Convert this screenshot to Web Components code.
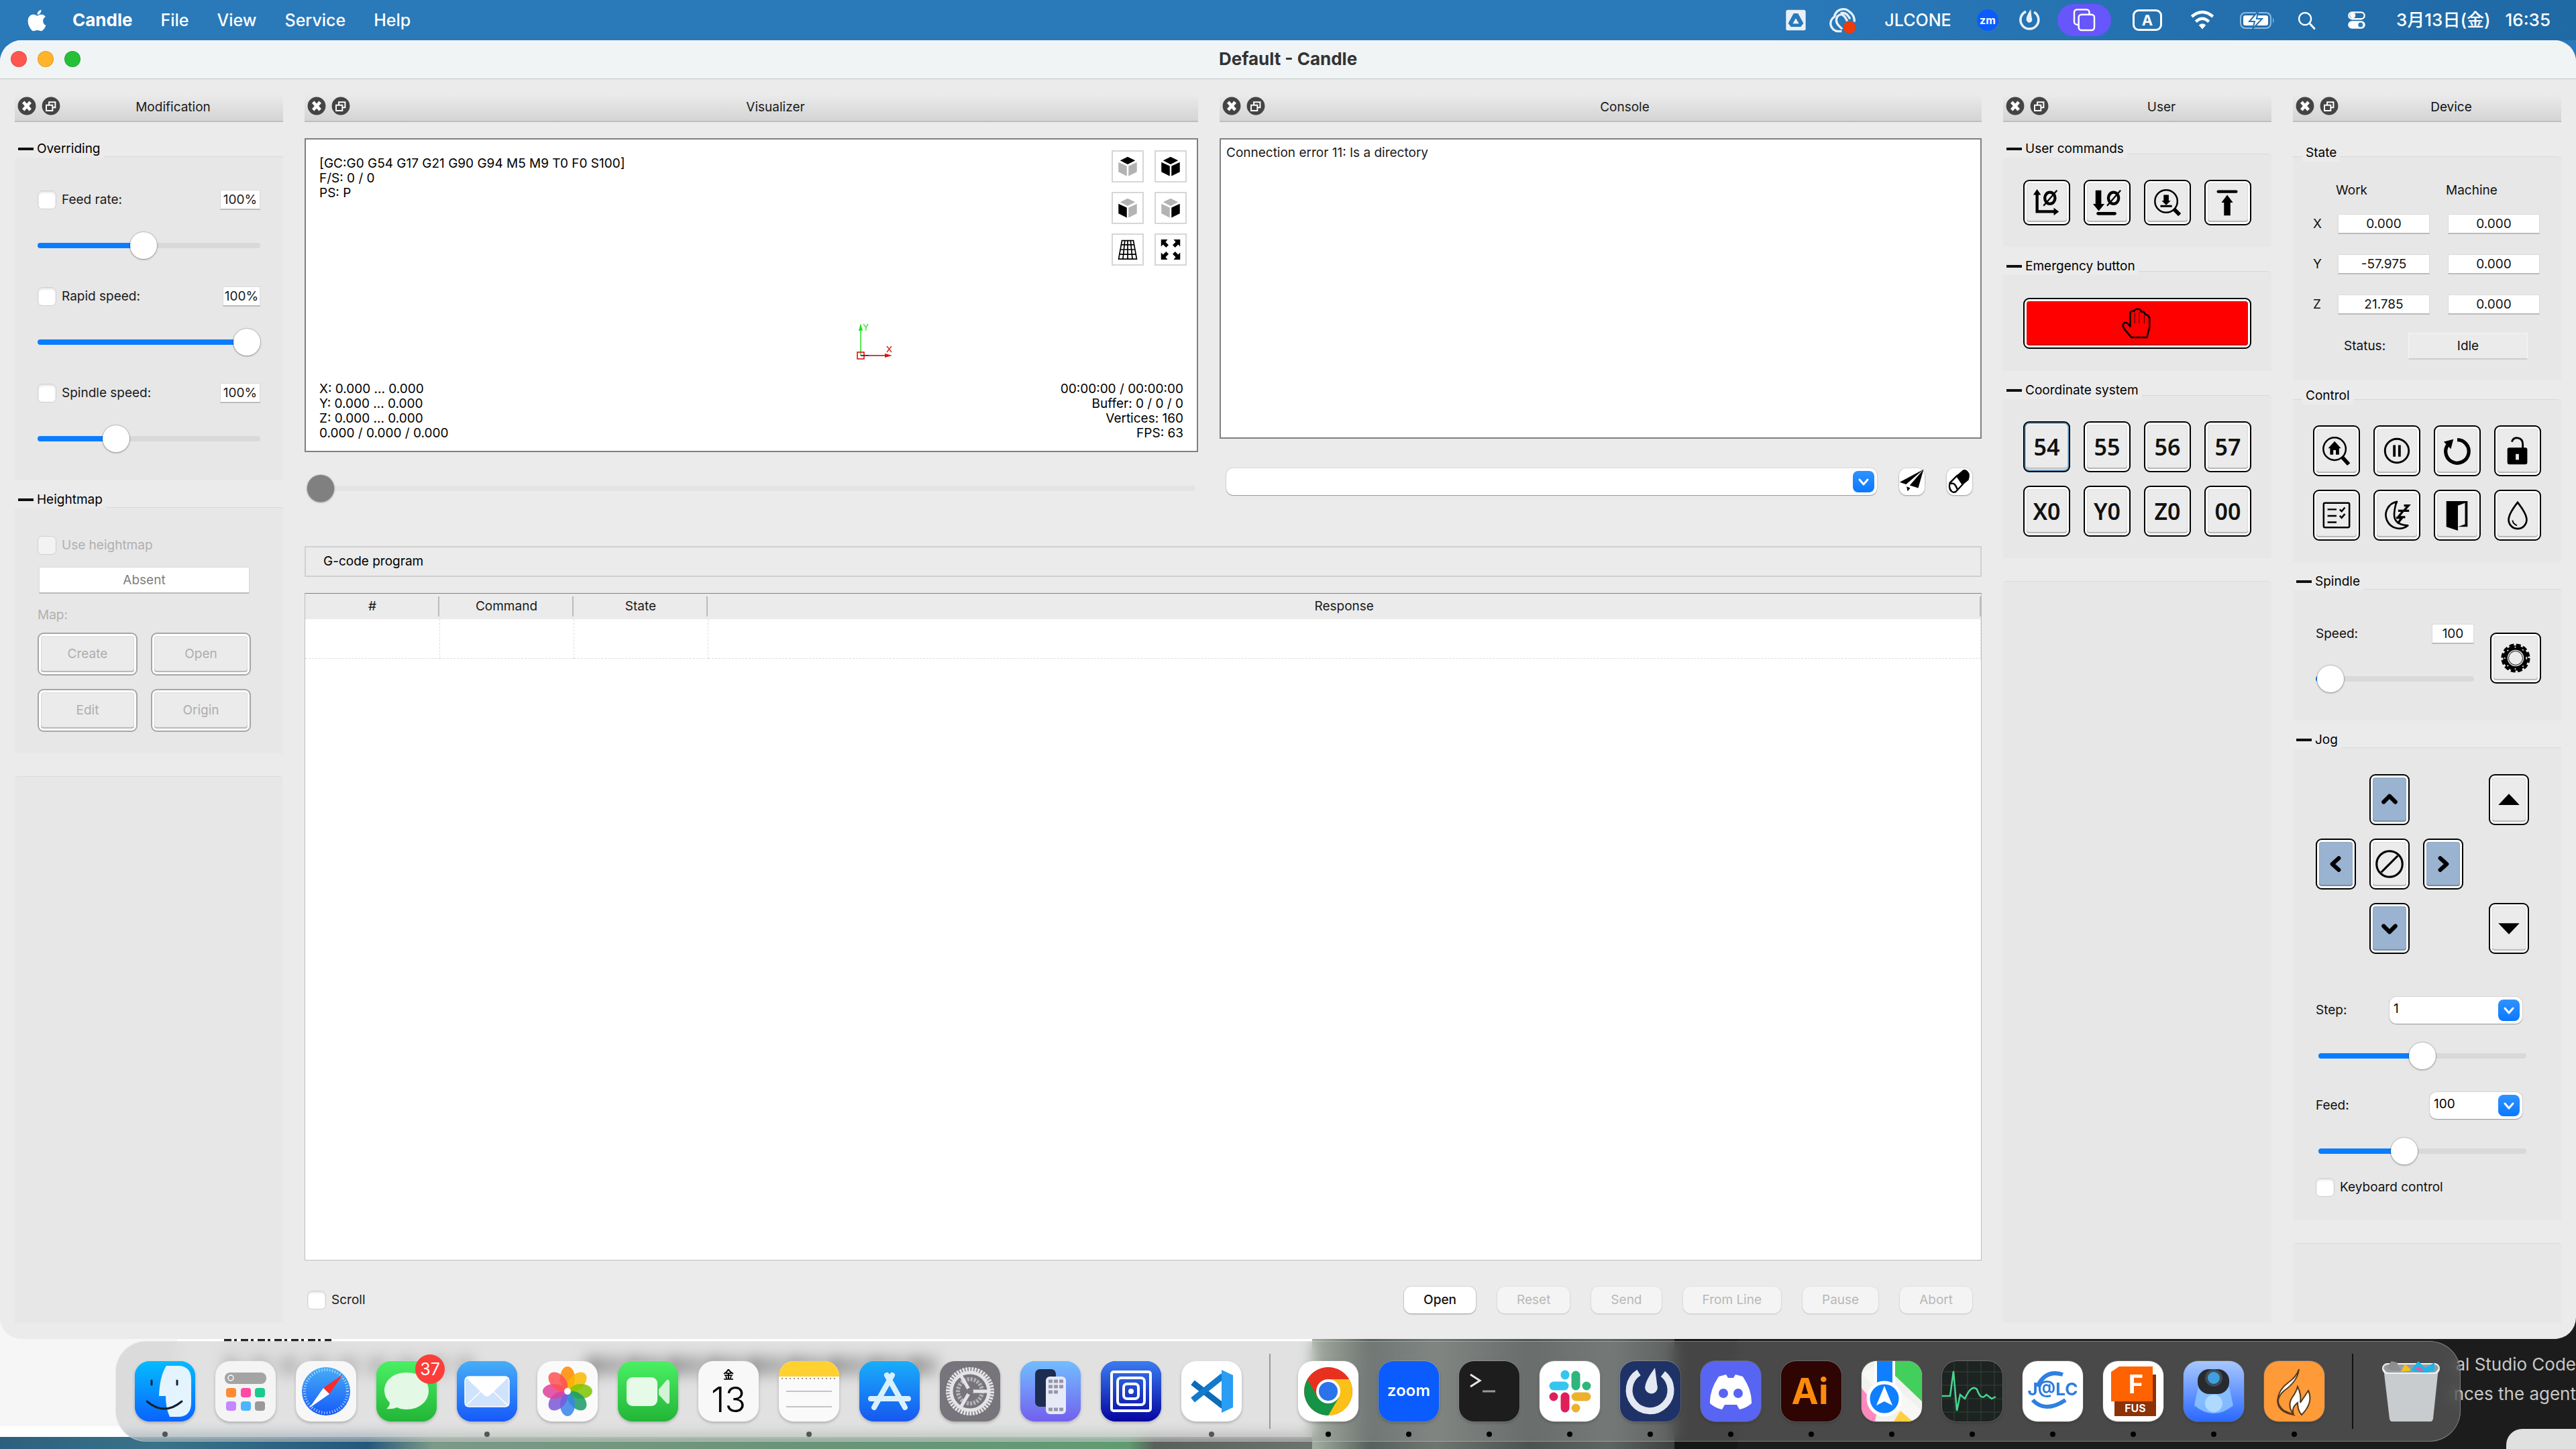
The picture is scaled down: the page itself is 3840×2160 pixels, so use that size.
<!DOCTYPE html>
<html lang="en">
<head>
<meta charset="utf-8">
<title>Default - Candle</title>
<style>
  html, body { margin: 0; }
  body {
    position: relative;
    display: flex;
    flex-direction: column;
    min-height: 100vh;
    overflow: hidden;
    font: 19px/24px Inter, "Liberation Sans", "Noto Sans CJK JP", sans-serif;
    color: #1a1a1a;
    background: #2a79b9;
  }
</style>
</head>
<body>
<desk-backdrop></desk-backdrop>
<menu-bar></menu-bar>
<app-window heading="Default - Candle">
  <modification-panel slot="left"></modification-panel>
  <program-area slot="center"></program-area>
  <user-panel slot="right"></user-panel>
  <device-panel slot="right"></device-panel>
</app-window>
<app-dock></app-dock>

<script>
const ICONS = {
  cubeTop: cube('#000', '#b3b3b3', '#b3b3b3'),
  cubeAll: cube('#000', '#000', '#000'),
  cubeLeft: cube('#b3b3b3', '#000', '#b3b3b3'),
  cubeRight: cube('#b3b3b3', '#b3b3b3', '#000'),
  grid: '<path fill="none" stroke="#000" stroke-width="2.4" d="M12 5H36L43 44H5ZM10 14H38M8 24H40M7 34H41M18 5L14 44M24 5V44M30 5L34 44"/>',
  expand: '<path d="M5 4H18L14 9L20 15L15 20L9 14L5 18ZM43 4H30L34 9L28 15L33 20L39 14L43 18ZM5 44H18L14 39L20 33L15 28L9 34L5 30ZM43 44H30L34 39L28 33L33 28L39 34L43 30Z"/>',
  plane: '<path d="M1 25L46 1L13 29ZM46 1L36 36L20 31ZM14 33L21 36L16 42Z"/>',
  eraser: '<path d="M19 12L29 3Q35-1 40 5Q45 10 41 21L30 30Z"/><path fill="#fff" stroke="#000" stroke-width="3" d="M19 13L30 29L18 42Q13 46 9 42Q3 37 6 26ZM7 28Q15 24 20 39"/>',
  zeroXY: '<path fill="none" stroke="#000" stroke-width="4.5" d="M9 9V38H37"/><path d="M3 12L9 3L15 12ZM35 32L43 38L35 44Z"/><g fill="none" stroke="#000"><ellipse cx="29" cy="17" rx="8" ry="9" stroke-width="4.5"/><path stroke-width="2.4" d="M19 29L40 5"/></g>',
  zeroZ: '<path d="M6 5H15V26H20L11 37L2 26H6Z"/><path stroke="#000" stroke-width="5" stroke-linecap="round" d="M10 41H36"/><g fill="none" stroke="#000"><ellipse cx="34" cy="17" rx="8" ry="9" stroke-width="4.5"/><path stroke-width="2.4" d="M24 29L45 5"/></g>',
  probe: '<circle cx="22" cy="22" r="17.5" fill="none" stroke="#000" stroke-width="2.6"/><path stroke="#000" stroke-width="6" d="M34 34L43 43"/><path d="M18 12H26V21H29L22 28L15 21H18ZM13 28H31V31H13Z"/>',
  safeZ: '<path stroke="#000" stroke-width="4.5" stroke-linecap="round" d="M9 7H37"/><path d="M23 12L32 24H28V44H18V24H14Z"/>',
  hand: '<path fill="none" stroke="#000" stroke-width="2.6" stroke-linejoin="round" d="M15 46L4 33Q-1 25 5 23Q9 22 13 29V8Q14 4 19 5Q21 1 25 2Q29 1 30 6Q35 5 36 10Q42 11 43 16V30L39 46Z"/><path stroke="#600" stroke-width="1.4" d="M20 7V24M27 6V24M35 10V24"/>',
  home: '<circle cx="21" cy="21" r="17.5" fill="none" stroke="#000" stroke-width="2.6"/><path stroke="#000" stroke-width="6" d="M33 34L43 45"/><path d="M21 9L31 20H28V30H23V23H19V30H14V20H11Z"/>',
  pause: '<circle cx="24" cy="24" r="18.5" fill="none" stroke="#000" stroke-width="3"/><path stroke="#000" stroke-width="4" d="M20 15V33M28 15V33"/>',
  reset: '<path fill="none" stroke="#000" stroke-width="5.5" d="M24 7A18 18 0 1 1 9 15"/><path d="M3 10L18 6L14 21Z"/>',
  unlock: '<rect x="8" y="19" width="31" height="26" rx="3"/><path fill="none" stroke="#000" stroke-width="3" d="M15 10Q17 3 24 4Q32 5 32 14V20"/><path fill="#ececec" d="M21 29H26V38H21Z"/>',
  list: '<rect x="4" y="5" width="40" height="38" rx="2" fill="none" stroke="#000" stroke-width="2.6"/><path fill="none" stroke="#000" stroke-width="2.6" d="M10 15H24M10 25H24M10 35H24M29 15L32 18L37 12M29 25L32 28L37 22"/>',
  sleep: '<path fill="none" stroke="#000" stroke-width="2.8" stroke-linejoin="round" d="M24 3A21 21 0 1 0 41 40Q18 39 20 20Q21 9 24 3Z"/><path fill="none" stroke="#000" stroke-width="3.4" d="M35 9H42L35 17H43M26 17H34L26 27H37M23 28H32L25 37"/>',
  door: '<path d="M7 2H40V42H25V48L7 42Z"/><path fill="#ececec" d="M25 9L36 5V38L25 42Z"/>',
  drop: '<path fill="none" stroke="#000" stroke-width="2.8" d="M24 4Q10 22 10 31A14 14 0 0 0 38 31Q38 22 24 4Z"/><path fill="none" stroke="#000" stroke-width="2" d="M16 32Q17 38 23 40"/>',
  spindle: '<circle cx="24" cy="24" r="15" fill="none" stroke="#000" stroke-width="9"/><circle cx="24" cy="24" r="20" fill="none" stroke="#000" stroke-width="5" stroke-dasharray="7 3.5"/><circle cx="24" cy="24" r="12" fill="none" stroke="#ddd" stroke-width="1.6"/><circle cx="24" cy="24" r="17" fill="none" stroke="#ddd" stroke-width="2" stroke-dasharray="2 11"/>',
  up: '<path fill="none" stroke="#000" stroke-width="7" stroke-linecap="round" stroke-linejoin="round" d="M14 28L24 18L34 28"/>',
  down: '<path fill="none" stroke="#000" stroke-width="7" stroke-linecap="round" stroke-linejoin="round" d="M14 20L24 30L34 20"/>',
  left: '<path fill="none" stroke="#000" stroke-width="7" stroke-linecap="round" stroke-linejoin="round" d="M29 14L18 24L29 34"/>',
  right: '<path fill="none" stroke="#000" stroke-width="7" stroke-linecap="round" stroke-linejoin="round" d="M19 14L30 24L19 34"/>',
  stop: '<circle cx="24" cy="24" r="22" fill="none" stroke="#000" stroke-width="3.6"/><path stroke="#000" stroke-width="3.6" d="M10 38L38 10"/>',
  zUp: '<path d="M6 33L24 14L42 33Z"/>',
  zDown: '<path d="M6 15L24 34L42 15Z"/>',
  close: '<circle cx="24" cy="24" r="23" fill="#444"/><path stroke="#fff" stroke-width="8" d="M15 14L33 34M33 14L15 34"/>',
  float: '<circle cx="24" cy="24" r="23" fill="#444"/><path fill="none" stroke="#fff" stroke-width="3.4" d="M12 22H28V36H12ZM19 20V14H35V28H29"/>',

  apple: '<path fill="#fff" d="M33 2Q34 10 25 13Q24 5 33 2ZM25 15Q29 12 34 12Q40 13 42 17Q36 21 37 27Q38 33 43 35Q41 42 36 46Q33 48 29 46Q25 44 21 46Q16 48 13 45Q5 36 5 25Q6 13 16 12Q20 12 25 15Z"/>',
  drive: '<path fill="#e8f1f8" fill-rule="evenodd" d="M6 1H42Q46 1 46 5V43Q46 47 42 47H6Q2 47 2 43V5Q2 1 6 1ZM19 9L7 31L13 39H35L41 31L29 9Z"/><path fill="#e8f1f8" d="M24 20L31 32H17Z"/>',
  cloud: '<path fill="none" stroke="#e8f1f8" stroke-width="4" d="M22 44H16A14 14 0 0 1 9 18A16 16 0 0 1 36 9Q45 15 45 27M15 16Q9 26 17 34Q20 37 23 40M15 17Q24 8 32 26"/><path fill="none" stroke="#e8f1f8" stroke-width="4" d="M20 12Q30 8 37 22"/><circle cx="36" cy="37" r="11" fill="#f03a0a"/>',
  flame: '<path fill="none" stroke="#e8f1f8" stroke-width="5" d="M17 6A19 19 0 1 0 34 7"/><path fill="#e8f1f8" d="M27 1Q16 18 18 24Q20 30 26 29Q32 27 29 18Z"/>',
  windows: '<rect x="6" y="5" width="27" height="27" rx="5" fill="none" stroke="#fff" stroke-width="3"/><rect x="14" y="14" width="28" height="28" rx="5" fill="#6656fb" stroke="#fff" stroke-width="3"/>',
  wifi: '<g fill="none" stroke="#fff" stroke-width="6"><path d="M3 17Q24-1 45 17M11 27Q24 15 37 27"/></g><path fill="#fff" d="M17 34Q24 28 31 34L24 42Z"/>',
  search: '<circle cx="20" cy="20" r="15" fill="none" stroke="#fff" stroke-width="4"/><path stroke="#fff" stroke-width="5" stroke-linecap="round" d="M31 31L43 44"/>',
  toggles: '<rect x="4" y="4" width="40" height="17" rx="8.500" fill="none" stroke="#fff" stroke-width="4"/><circle cx="14" cy="12" r="7" fill="#fff"/><rect x="2" y="26" width="44" height="20" rx="10" fill="#fff"/><circle cx="34" cy="36" r="6" fill="#2a79b9"/>',
};

function cube(top, left, right) {
  return `<path fill="${top}" d="M24 1L42 10L24 19L6 10Z"/><path fill="${left}" d="M2 14L22 23V47L2 37Z"/><path fill="${right}" d="M46 14L26 23V47L46 37Z"/>`;
}

// art for the dock tiles, drawn on a 90 x 90 tile
const TILES = {
  Finder: ['#10a7ff', '<rect width="90" height="90" fill="url(#g1)"/><path fill="#e4f4ff" d="M44 52H36Q37 22 47 7H66Q84 8 84 28V62Q84 82 66 83H52Q46 70 46 52Z"/><path fill="none" stroke="#123" stroke-width="3" stroke-linecap="round" d="M25 29V35M63 29V35M18 60Q44 82 70 60"/>'],
  Apps: ['#f4f4f4', '<rect x="14" y="17" width="62" height="17" rx="8" fill="#a4a4a4"/><circle cx="23" cy="25" r="4" fill="none" stroke="#fff" stroke-width="1.5"/><rect x="16" y="40" width="15" height="14" rx="4" fill="#ff8a34"/><rect x="38" y="40" width="15" height="14" rx="4" fill="#ff4aa4"/><rect x="59" y="40" width="15" height="14" rx="4" fill="#1cc98f"/><rect x="16" y="60" width="15" height="14" rx="4" fill="#c586ff"/><rect x="38" y="60" width="15" height="14" rx="4" fill="#4db5ff"/><rect x="59" y="60" width="15" height="14" rx="4" fill="#999"/>'],
  Safari: ['#f7f7f7', '<circle cx="45" cy="45" r="36" fill="url(#g2)"/><circle cx="45" cy="45" r="32" fill="none" stroke="#cfe6ff" stroke-width="4" stroke-dasharray="1 3"/><path fill="#ff2a2a" d="M70 20L50 49L41 40Z"/><path fill="#fff" d="M20 70L50 49L41 40Z"/>'],
  Messages: ['#36d04b', '<rect width="90" height="90" fill="url(#g3)"/><path fill="#e3f9e5" d="M45 17C66 17 78 29 78 44C78 60 64 72 45 72Q36 72 31 69Q24 72 15 71Q20 67 20 62Q12 54 12 44C12 29 25 17 45 17Z"/>'],
  Mail: ['#2c85f7', '<rect width="90" height="90" fill="url(#g2)"/><rect x="12" y="23" width="66" height="45" rx="6" fill="#cfe3fd" stroke="#fff" stroke-width="1.500"/><path fill="none" stroke="#fff" stroke-width="1.500" d="M13 67L37 44M77 67L53 44"/><path fill="#fff" d="M13 24H77L49 51Q45 54 41 51Z"/>'],
  Photos: ['#fafafa', ['#ff8a00', '#f9b800', '#7fc400', '#1a9c66', '#3a83ea', '#7a58d6', '#e0409c', '#ff5252'].map((c, i) => `<ellipse cx="45" cy="25" rx="11" ry="17" fill="${c}" fill-opacity=".86" transform="rotate(${i * 45} 45 45)"/>`).join('') + '<circle cx="45" cy="45" r="5" fill="#fff"/>'],
  FaceTime: ['#36d04b', '<rect width="90" height="90" fill="url(#g3)"/><rect x="13" y="24" width="46" height="43" rx="9" fill="#e6fae8"/><path fill="#d2f3d5" d="M61 42L73 28Q77 27 77 32V60Q77 65 73 63L61 50Z"/>'],
  Calendar: ['#f8f8f8', '<text x="45" y="26" font-size="16" font-weight="700" text-anchor="middle" font-family="Noto Sans CJK JP">金</text><text x="45" y="76" font-size="52" font-weight="300" text-anchor="middle">13</text>'],
  Notes: ['#fafafa', '<rect width="90" height="23" fill="#ffd130"/><path stroke="#999" stroke-width="2" stroke-dasharray="2 4" d="M4 26H88"/><path stroke="#c4c4c4" stroke-width="2" d="M11 45H79M11 68H79"/>'],
  'App Store': ['#1c8df8', '<rect width="90" height="90" fill="url(#g4)"/><g stroke="#d9f1ff" stroke-width="8" stroke-linecap="round"><path d="M49 21L22 69M41 21L68 69M17 56H73"/></g>'],
  Settings: ['#77757b', '<circle cx="45" cy="45" r="33" fill="none" stroke="#e4e4e6" stroke-width="6" stroke-dasharray="3 1.500"/><circle cx="45" cy="45" r="28" fill="none" stroke="#e4e4e6" stroke-width="5"/><circle cx="45" cy="45" r="18" fill="none" stroke="#b5b4b8" stroke-width="6" stroke-dasharray="3 2"/><path stroke="#e4e4e6" stroke-width="5" d="M45 45H73M45 45L31 21M45 45L31 69"/><circle cx="45" cy="45" r="5" fill="#77757b"/>'],
  Mirroring: ['#7297fb', '<rect width="90" height="90" fill="url(#g5)"/><rect x="22" y="12" width="31" height="56" rx="7" fill="#1d2d4f"/><rect x="38" y="23" width="30" height="56" rx="6" fill="#e8e9f7"/><path stroke="#9497a8" stroke-width="5" stroke-dasharray="6 2" d="M42 30H64M42 38H64M42 46H57M42 72H64"/>'],
  Frames: ['#1738c4', '<rect width="90" height="90" fill="url(#g6)"/><g fill="none" stroke="#fff" stroke-width="4"><rect x="16" y="16" width="58" height="58" rx="3"/><rect x="25" y="25" width="40" height="40" rx="5"/><rect x="34" y="34" width="22" height="22" rx="5"/></g><circle cx="45" cy="45" r="4" fill="#fff"/>'],
  Code: ['#fff', '<path fill="none" stroke="#0a6dba" stroke-width="9" d="M17 32L62 67"/><path fill="none" stroke="#1379cb" stroke-width="9" d="M17 58L62 22"/><path fill="#2a9df4" d="M60 13L77 21V69L60 77Z"/>'],
  Chrome: ['#fff', '<circle cx="45" cy="45" r="36" fill="#e8301f"/><path fill="#fbc116" d="M45 27H76A36 36 0 0 1 45 81L60 54Z"/><path fill="#159447" d="M14 27A36 36 0 0 0 45 81L61 54L45 62L29 54Z"/><path fill="#e8301f" d="M14 27A36 36 0 0 1 76 27H45L29 36Z"/><circle cx="45" cy="45" r="18" fill="#fff"/><circle cx="45" cy="45" r="14" fill="#2a73ea"/>'],
  Zoom: ['#0b5cff', '<text x="45" y="52" font-size="24" font-weight="600" fill="#fff" text-anchor="middle">zoom</text>'],
  Terminal: ['#1d1d1d', '<path fill="none" stroke="#e6e6e6" stroke-width="3" d="M17 20L31 29L17 38"/><path stroke="#999" stroke-width="3" d="M35 45H54"/>'],
  Slack: ['#fff', '<g stroke-width="13" stroke-linecap="round"><path stroke="#36c5f0" d="M21 37H37M38 20V21"/><path stroke="#2eb67d" d="M54 21V37M70 37H70"/><path stroke="#ecb22e" d="M54 53H70M54 70V70"/><path stroke="#e01e5a" d="M38 53V70M21 53H21"/></g>'],
  Mattermost: ['#1f3268', '<path fill="none" stroke="#e3e8f2" stroke-width="10" d="M28 17A31 31 0 1 0 64 19"/><path fill="#e3e8f2" d="M52 10Q34 34 38 43Q42 50 50 48Q58 44 55 34Z"/>'],
  Discord: ['#5865f2', '<path fill="#fff" d="M27 23L38 20L41 25H49L52 20L63 23Q77 44 76 63Q68 70 58 72L54 65H36L32 72Q22 70 14 63Q13 44 27 23Z"/><circle cx="34" cy="48" r="7" fill="#5865f2"/><circle cx="56" cy="48" r="7" fill="#5865f2"/>'],
  Illustrator: ['#2e0503', '<text x="43" y="64" font-size="54" font-weight="700" fill="#ff8a0a" text-anchor="middle">Ai</text>'],
  Maps: ['#f1f1ee', '<path fill="#43cf5b" d="M0 0H90V60L46 18V0Z"/><path fill="#ff88bd" d="M0 40L24 70L20 90H0Z"/><path fill="#f7f7f5" d="M0 18L16 8L90 74V90H70Z"/><path fill="#ffcf3f" d="M48 90L58 74L76 90Z"/><path fill="#0f7fff" stroke="#fff" stroke-width="4" d="M21 -4H48V34H21Z"/><circle cx="34" cy="56" r="24" fill="#0f7fff" stroke="#fff" stroke-width="5"/><path fill="#fff" d="M34 37L46 66L34 60L22 66Z"/>'],
  Monitor: ['#1d2321', '<path stroke="#31443b" stroke-width="1" d="M0 16H90M0 36H90M0 56H90M0 76H90M18 0V90M38 0V90M58 0V90M78 0V90"/><path fill="none" stroke="#48d690" stroke-width="2.500" d="M0 52H12L17 15L22 74L27 50L34 56Q44 34 52 42Q58 60 66 50L74 56L80 53"/>'],
  JLC: ['#fff', '<g fill="none" stroke="#2f80e0" stroke-width="6"><path d="M60 20Q34 12 22 38M15 58Q34 78 64 58"/></g><text x="45" y="51" font-size="26" font-weight="700" fill="#2f7de0" text-anchor="middle">J@LC</text>'],
  Fusion: ['#fff', '<path fill="#ff6200" d="M12 16L24 8H74V60H12Z"/><path fill="#8c3204" d="M17 60H74V20H79V82H17Z"/><path fill="#ff6200" d="M24 8H74V60H24Z"/><text x="49" y="48" font-size="38" font-weight="700" fill="#fff" text-anchor="middle">F</text><text x="48" y="76" font-size="16" font-weight="700" fill="#fff" text-anchor="middle">FUS</text>'],
  Preview: ['#6aa2fd', '<rect width="90" height="90" fill="url(#g7)"/><path fill="#8fc8ff" fill-opacity=".8" d="M22 38H68L74 66Q60 78 45 78Q30 78 16 66Z"/><circle cx="45" cy="63" r="13" fill="#aedaff"/><rect x="21" y="12" width="47" height="37" rx="17" fill="#272a2e"/><circle cx="45" cy="25" r="13" fill="#3f4b55"/><circle cx="45" cy="25" r="9" fill="#3f9fe0"/>'],
  Candle: ['#ff9a38', '<path fill="#fff" stroke="#553a1c" stroke-width="2" d="M52 12Q50 30 30 44Q12 60 30 74L44 80Q34 66 42 54Q48 46 50 38Q56 50 54 62L66 44Q74 62 56 80Q50 74 50 62Q40 70 44 80Q20 76 20 58Q22 42 36 32Q48 24 52 12Z"/>'],
  Trash: ['none', '<path fill="#c9ccce" d="M4 10H86L78 86Q77 91 71 91H20Q14 91 13 86Z"/><rect x="3" y="4" width="84" height="14" rx="7" fill="#9a9da0" stroke="#f2f2f2" stroke-width="2"/><path fill="#8e8e8e" d="M8 10L16 0L24 2L30 14H16Z"/><path fill="#f3c31d" d="M30 16L36 4L46 14Z"/><path fill="#1fb5e8" d="M44 14L56 0L66 10L80 2V14L66 18Z"/><path fill="#f0529c" d="M50 12L58 8L64 16Z"/><path fill="none" stroke="#f2f2f2" stroke-width="2" d="M4 12Q6 18 12 18H78Q84 18 86 12"/>'],
};

function icon(name, size) {
  return `<svg width="${size}" height="${size}" viewBox="0 0 48 48" aria-hidden="true">${ICONS[name]}</svg>`;
}

class DeskBackdrop extends HTMLElement {
  connectedCallback() {
    this.attachShadow({ mode: 'open' }).innerHTML = `
      <style>
        :host {
          position: absolute;
          inset: auto 0 0 0;
          height: 220px;
          display: grid;
          grid-template-columns: 1956fr 540fr 1344fr;
        }
        .page {
          display: grid;
          grid-template-columns: 264px 1fr;
          grid-template-rows: 1fr 16px 18px;
          background: #fff;
        }
        .side { background: #f6f6f6; }
        .heading {
          grid-row: 1;
          grid-column: 2;
          width: 160px;
          height: 60px;
          margin-left: 70px;
          background: repeating-linear-gradient(90deg, #222 0 11px, #fff 11px 15px, #222 15px 19px, #fff 19px 25px);
        }
        .lines {
          grid-row: 1;
          grid-column: 2;
          align-self: end;
          height: 28px;
          margin: 0 560px 76px 70px;
          background:
            repeating-linear-gradient(90deg, #888 0 22px, #c4c4c4 22px 34px, #999 34px 48px, #e2e2e2 48px 60px) right / 522px 100% no-repeat,
            repeating-linear-gradient(90deg, #bbb 0 18px, #ececec 18px 44px) left / 370px 100% no-repeat;
        }
        .paint {
          grid-row: 3;
          grid-column: 1 / 3;
          background: linear-gradient(90deg, #2c5f7d 0, #3a7389 12%, #24587a 28%, #7c9a86 33%, #6a9479 60%, #5f9c72 86%, #59605a 88%, #6d736d 100%);
        }
        .rock { background: linear-gradient(90deg, #a3afa0 0, #56605c 16%, #6f7672 34%, #4b524f 60%, #5d6461 82%, #3c403f 100%); }
        .editor {
          position: relative;
          padding-top: 72px;
          overflow: hidden;
          background: linear-gradient(90deg, #161616 0 94px, #1c1c1c 94px 100%);
          color: #c8c8c8;
          font-size: 26px;
          line-height: 44px;
          text-align: right;
        }
        .editor p { margin: 0; }
        .corner {
          position: absolute;
          right: 0;
          bottom: 0;
          width: 104px;
          height: 30px;
          border-radius: 24px 0 0 0;
          background: #e0e0e0;
        }
      </style>
      <div class="page"><div class="side"></div><div class="heading"></div><div class="lines"></div><div class="paint"></div></div>
      <div class="rock"></div>
      <div class="editor"><p>al Studio Code</p><p>nces the agent</p><div class="corner"></div></div>
    `;
  }
}
customElements.define('desk-backdrop', DeskBackdrop);

class MenuBar extends HTMLElement {
  connectedCallback() {
    this.attachShadow({ mode: 'open' }).innerHTML = `
      <style>
        :host {
          position: relative;
          display: flex;
          align-items: center;
          justify-content: space-between;
          height: 60px;
          padding: 0 38px;
          background: linear-gradient(90deg, #2a79b9 0 68%, #1f69a5);
          color: #fff;
          font-size: 25px;
          font-weight: 500;
        }
        nav, .status { display: flex; align-items: center; }
        nav { gap: 42px; }
        nav a { color: inherit; text-decoration: none; }
        nav a.app { margin-left: -6px; font-size: 26px; font-weight: 700; }
        svg { display: block; }
        .status span { display: flex; justify-content: center; }
        .s { width: 54px; }
        .m { width: 70px; }
        .l { width: 94px; }
        .xl { width: 154px; }
        .pill {
          width: 80px;
          height: 48px;
          align-items: center;
          border-radius: 24px;
          background: #6656fb;
        }
        .zm {
          width: 32px;
          height: 32px;
          border-radius: 50%;
          background: #0b5cff;
          font-size: 16px;
          line-height: 32px;
          text-align: center;
        }
        .key {
          width: 38px;
          height: 26px;
          border: 3px solid #fff;
          border-radius: 9px;
          font-size: 22px;
          line-height: 26px;
          text-align: center;
        }
        time { display: flex; gap: 22px; padding-left: 12px; font-size: 26px; }
      </style>
      <nav>
        ${icon('apple', 34)}
        <a class="app" href="#candle">Candle</a>
        <a href="#file">File</a>
        <a href="#view">View</a>
        <a href="#service">Service</a>
        <a href="#help">Help</a>
      </nav>
      <div class="status">
        <span class="m">${icon('drive', 32)}</span>
        <span class="m">${icon('cloud', 40)}</span>
        <span class="xl">JLCONE</span>
        <span class="s"><b class="zm">zm</b></span>
        <span class="m">${icon('flame', 34)}</span>
        <span class="l"><span class="pill">${icon('windows', 40)}</span></span>
        <span class="l"><b class="key">A</b></span>
        <span class="m">${icon('wifi', 36)}</span>
        <span class="l">
          <svg width="52" height="28" viewBox="0 0 52 28" aria-hidden="true">
            <rect x="1" y="3" width="45" height="23" rx="7" fill="none" stroke="#8fbadd" stroke-width="2"/>
            <rect x="5" y="7" width="37" height="15" rx="3" fill="#fff"/>
            <path d="M49 10V19Q52 15 49 10Z" fill="#8fbadd"/>
            <path d="M27 1L14 16H22L19 27L33 12H25Z" fill="#fff" stroke="#2672af" stroke-width="2"/>
          </svg>
        </span>
        <span class="s">${icon('search', 29)}</span>
        <span class="l">${icon('toggles', 28)}</span>
        <time datetime="16:35"><span>3月13日(金)</span><span>16:35</span></time>
      </div>
    `;
  }
}
customElements.define('menu-bar', MenuBar);

class AppWindow extends HTMLElement {
  connectedCallback() {
    this.attachShadow({ mode: 'open' }).innerHTML = `
      <style>
        :host {
          position: relative;
          flex: 1;
          display: flex;
          flex-direction: column;
          border-radius: 32px;
          background: #ebebeb;
        }
        header {
          display: grid;
          grid-template-columns: 1fr auto 1fr;
          align-items: center;
          height: 55px;
          padding: 0 16px 2px;
          border-bottom: 1px solid #c4c7c8;
          border-radius: 32px 32px 0 0;
          background: #f0f4f5;
        }
        h1 { margin: 0; font-size: 26px; font-weight: 700; color: #333; }
        .lights { display: flex; gap: 16px; }
        .lights button {
          width: 24px;
          height: 24px;
          padding: 0;
          border: 1px solid rgba(0, 0, 0, .12);
          border-radius: 50%;
        }
        main {
          flex: 1;
          display: grid;
          grid-template-columns: 400px 1fr auto;
          gap: 32px;
          padding: 22px 22px 24px;
        }
        .right { display: grid; grid-template-columns: 400px 400px; gap: 32px; }
        ::slotted(*) { min-width: 0; }
      </style>
      <header>
        <div class="lights">
          <button aria-label="Close" style="background: #ff5650"></button>
          <button aria-label="Minimize" style="background: #ffb429"></button>
          <button aria-label="Zoom" style="background: #24c138"></button>
        </div>
        <h1>${this.getAttribute('heading')}</h1>
      </header>
      <main>
        <slot name="left"></slot>
        <slot name="center"></slot>
        <div class="right"><slot name="right"></slot></div>
      </main>
    `;
  }
}
customElements.define('app-window', AppWindow);

class DockPanel extends HTMLElement {
  connectedCallback() {
    this.attachShadow({ mode: 'open' }).innerHTML = `
      <style>
        :host { display: flex; flex-direction: column; height: 100%; }
        header {
          display: flex;
          align-items: center;
          gap: 8px;
          height: 40px;
          padding: 0 4px;
          border-bottom: 2px solid #bebebe;
          background: linear-gradient(#ebebeb, #d4d4d4);
        }
        header button {
          width: 28px;
          height: 28px;
          margin-bottom: 4px;
          padding: 0;
          border: 0;
          background: none;
        }
        svg { display: block; }
        h2 { flex: 1; margin: 0; font-size: inherit; font-weight: 400; text-align: center; }
      </style>
      <header>
        <button aria-label="Close panel">${icon('close', 28)}</button>
        <button aria-label="Float panel">${icon('float', 28)}</button>
        <h2>${this.getAttribute('heading')}</h2>
      </header>
      <slot></slot>
    `;
  }
}
customElements.define('dock-panel', DockPanel);

class GroupBox extends HTMLElement {
  connectedCallback() {
    const heading = this.getAttribute('heading');
    const mark = this.hasAttribute('inset') ? '' : '<i></i>';
    this.attachShadow({ mode: 'open' }).innerHTML = `
      <style>
        :host { display: block; margin-top: 16px; --lip: 2px; }
        :host([lip]) { --lip: 6px; }
        :host([inset]) { --lip: 8px; margin-top: 10px; }
        :host([filler]) {
          flex: 1;
          margin-top: 34px;
          border-top: 1px solid #dadada;
          border-radius: 6px 6px 0 0;
          background: #e7e7e7;
        }
        header { display: flex; align-items: end; height: 26px; }
        header::before, header::after {
          content: "";
          height: var(--lip);
          box-sizing: border-box;
          border-top: 1px solid #d8d8d8;
          background: #e7e7e7;
        }
        header::before { display: none; width: 14px; }
        header::after { flex: 1; border-top-right-radius: 6px; }
        :host([inset]) header::before { display: block; }
        h3 {
          display: flex;
          align-items: center;
          gap: 5px;
          height: 26px;
          margin: 0;
          padding: 0 5px;
          font-size: inherit;
          font-weight: 400;
          color: #000;
        }
        i { width: 23px; height: 4px; background: #111; }
        .body { background: #e7e7e7; }
      </style>
      ${heading ? `<header><h3>${mark}${heading}</h3></header>` : ''}
      <div class="body"><slot></slot></div>
    `;
  }
}
customElements.define('group-box', GroupBox);

class CheckBox extends HTMLElement {
  connectedCallback() {
    const off = this.hasAttribute('disabled') ? 'disabled' : '';
    this.attachShadow({ mode: 'open' }).innerHTML = `
      <style>
        :host { display: block; }
        :host([disabled]) { color: #b0b0b0; }
        label { display: flex; align-items: center; gap: 8px; height: 28px; }
        input {
          appearance: none;
          width: 28px;
          height: 28px;
          margin: 0;
          border: 1px solid #d0d0d0;
          border-radius: 7px;
          background: #fff;
          box-shadow: inset 0 2px 3px rgba(0, 0, 0, .12);
        }
        input:disabled { background: #f3f3f3; box-shadow: none; }
      </style>
      <label><input type="checkbox" ${off}><slot></slot></label>
    `;
  }
}
customElements.define('check-box', CheckBox);

class ValueField extends HTMLElement {
  connectedCallback() {
    this.attachShadow({ mode: 'open' }).innerHTML = `
      <style>
        :host { display: block; }
        input {
          display: block;
          box-sizing: border-box;
          width: 100%;
          height: var(--field-height, 30px);
          padding: 0;
          border: 1px solid #dadada;
          border-bottom: 2px solid #bcbcbc;
          background: #fff;
          color: inherit;
          font: inherit;
          text-align: center;
        }
        :host([flat]) input { border-color: #f4f4f4 #f4f4f4 #ccc; background: #ebebeb; }
        :host([soft]) { color: #808080; }
      </style>
      <input type="text" readonly aria-label="${this.getAttribute('label')}" value="${this.getAttribute('value')}">
    `;
  }
}
customElements.define('value-field', ValueField);

class RangeSlider extends HTMLElement {
  connectedCallback() {
    const value = this.getAttribute('value');
    const off = this.hasAttribute('disabled') ? 'disabled' : '';
    this.attachShadow({ mode: 'open' }).innerHTML = `
      <style>
        :host { display: block; }
        input {
          --pos: calc(20px + (100% - 40px) * ${value} / 1000);
          appearance: none;
          display: block;
          width: 100%;
          height: 40px;
          margin: 0;
          background: none;
        }
        input::-webkit-slider-runnable-track {
          height: 8px;
          border-radius: 4px;
          background: linear-gradient(#0a7dff, #0a7dff) left / var(--pos) 100% no-repeat #d9d9d9;
        }
        input::-webkit-slider-thumb {
          appearance: none;
          width: 40px;
          height: 40px;
          margin-top: -16px;
          border-radius: 50%;
          background: #fff;
          box-shadow: 0 0 1px 1px rgba(0, 0, 0, .14), 0 1px 3px rgba(0, 0, 0, .3);
        }
        input:disabled::-webkit-slider-runnable-track { background: #e3e3e3; }
        input:disabled::-webkit-slider-thumb { background: #808080; }
      </style>
      <input type="range" min="0" max="1000" value="${value}" aria-label="${this.getAttribute('label')}" ${off}>
    `;
  }
}
customElements.define('range-slider', RangeSlider);

// keycap-like button; holds an icon or a short text
class KeyButton extends HTMLElement {
  connectedCallback() {
    const name = this.getAttribute('icon');
    const off = this.hasAttribute('disabled') ? 'disabled' : '';
    this.attachShadow({ mode: 'open' }).innerHTML = `
      <style>
        :host { display: block; height: 76px; }
        :host([low]) { height: 68px; }
        :host([text]) { height: 64px; }
        button {
          display: flex;
          width: 100%;
          height: 100%;
          padding: 3px;
          border: 2px solid #000;
          border-radius: 9px;
          background: #fff;
          color: #111;
          font: 600 34px/40px "Noto Sans", sans-serif;
        }
        button:disabled { border-color: #a6a6a6; color: #aeaeae; font: inherit; }
        span {
          flex: 1;
          align-self: stretch;
          display: flex;
          align-items: center;
          justify-content: center;
          border-radius: 4px;
          background: var(--face, #ebebeb);
          box-shadow: inset 0 -2px 1px rgba(0, 0, 0, .2), inset 0 0 2px rgba(0, 0, 0, .16);
        }
        svg { display: block; }
        :host([active]) button { background: #6fa9d0; }
        :host([active]) span { box-shadow: 0 0 0 1px #fff, inset 0 -2px 1px rgba(0, 0, 0, .2); }
        :host([blue]) { --face: #99b3d0; }
        :host([danger]) { --face: #f00; }
      </style>
      <button type="button" ${name ? `aria-label="${this.getAttribute('label')}"` : ''} ${off}><span>${name ? icon(name, this.hasAttribute('small') ? 42 : 46) : '<slot></slot>'}</span></button>
    `;
  }
}
customElements.define('key-button', KeyButton);

class PushButton extends HTMLElement {
  connectedCallback() {
    const name = this.getAttribute('icon');
    const off = this.hasAttribute('disabled') ? 'disabled' : '';
    this.attachShadow({ mode: 'open' }).innerHTML = `
      <style>
        :host { display: block; }
        button {
          display: flex;
          align-items: center;
          justify-content: center;
          box-sizing: border-box;
          min-width: 36px;
          height: 40px;
          padding: 0 29px;
          border: 0;
          border-radius: 11px;
          background: #fff;
          box-shadow: 0 0 1px 1px rgba(0, 0, 0, .08), 0 1px 2px rgba(0, 0, 0, .3);
          color: #111;
          font: inherit;
          font-weight: 500;
        }
        button:disabled {
          background: #f4f4f4;
          box-shadow: 0 0 1px 1px rgba(0, 0, 0, .04), 0 1px 2px rgba(0, 0, 0, .14);
          color: #b8b8b8;
          font-weight: 400;
        }
        :host([icon]) button { padding: 0; }
        svg { display: block; }
      </style>
      <button type="button" ${name ? `aria-label="${this.getAttribute('label')}"` : ''} ${off}>${name ? icon(name, 38) : '<slot></slot>'}</button>
    `;
  }
}
customElements.define('push-button', PushButton);

class ComboBox extends HTMLElement {
  connectedCallback() {
    this.attachShadow({ mode: 'open' }).innerHTML = `
      <style>
        :host { display: grid; height: 40px; }
        select, .chip { grid-area: 1 / 1; }
        select {
          appearance: none;
          width: 100%;
          padding: 0 6px 4px;
          border: 0;
          border-radius: 10px;
          background: #fff;
          box-shadow: 0 0 1px 1px rgba(0, 0, 0, .08), 0 1px 1px rgba(0, 0, 0, .3);
          color: #000;
          font: inherit;
        }
        .chip {
          justify-self: end;
          align-self: center;
          display: block;
          width: 32px;
          height: 32px;
          margin-right: 4px;
          border-radius: 8px;
          background: linear-gradient(#2f92ff, #0a78ff);
          pointer-events: none;
        }
      </style>
      <select aria-label="${this.getAttribute('label')}"><option>${this.getAttribute('value') || ''}</option></select>
      <svg class="chip" viewBox="0 0 32 32" aria-hidden="true"><path d="M10 13L16 20L22 13" fill="none" stroke="#fff" stroke-width="3" stroke-linecap="round" stroke-linejoin="round"/></svg>
    `;
  }
}
customElements.define('combo-box', ComboBox);

class ModificationPanel extends HTMLElement {
  connectedCallback() {
    const override = (name, value, pos, width) => `
      <div class="override">
        <div class="row">
          <check-box>${name}:</check-box>
          <value-field style="width: ${width}px" label="${name}" value="${value}"></value-field>
        </div>
        <range-slider label="${name}" value="${pos}"></range-slider>
      </div>`;
    this.attachShadow({ mode: 'open' }).innerHTML = `
      <style>
        :host { display: block; }
        .first { margin-top: 27px; }
        .overrides { display: grid; gap: 41px; padding: 48px 34px 42px; }
        .override { display: grid; gap: 33px; }
        .row { display: flex; align-items: center; justify-content: space-between; }
        .map { display: flex; flex-direction: column; padding: 41px 48px 32px 34px; color: #b0b0b0; }
        .map value-field { --field-height: 40px; margin: 18px 2px 20px; }
        .keys { display: grid; grid-template-columns: 1fr 1fr; gap: 20px; margin-top: 14px; }
      </style>
      <dock-panel heading="Modification">
        <group-box class="first" heading="Overriding">
          <div class="overrides">
            ${override('Feed rate', '100%', 473, 60)}
            ${override('Rapid speed', '100%', 1000, 56)}
            ${override('Spindle speed', '100%', 332, 60)}
          </div>
        </group-box>
        <group-box heading="Heightmap">
          <div class="map">
            <check-box disabled>Use heightmap</check-box>
            <value-field soft label="Heightmap file" value="Absent"></value-field>
            <div>Map:</div>
            <div class="keys">
              <key-button text disabled>Create</key-button>
              <key-button text disabled>Open</key-button>
              <key-button text disabled>Edit</key-button>
              <key-button text disabled>Origin</key-button>
            </div>
          </div>
        </group-box>
        <group-box filler></group-box>
      </dock-panel>
    `;
  }
}
customElements.define('modification-panel', ModificationPanel);

class VisualizerView extends HTMLElement {
  connectedCallback() {
    this.attachShadow({ mode: 'open' }).innerHTML = `
      <style>
        :host {
          position: relative;
          display: grid;
          grid-template-columns: 1fr auto;
          align-content: space-between;
          box-sizing: border-box;
          height: 468px;
          padding: 16px 15px 15px 20px;
          border: 2px solid #808080;
          background: #fff;
          color: #000;
          line-height: 22px;
        }
        .top { padding-top: 9px; }
        .views {
          display: grid;
          grid-template-columns: 48px 48px;
          justify-content: end;
          gap: 14px 16px;
        }
        .views button {
          display: grid;
          place-items: center;
          width: 48px;
          height: 48px;
          padding: 0;
          border: 2px solid #d6d6d6;
          background: #fff;
        }
        .right { padding-right: 5px; text-align: right; }
        .axes { position: absolute; left: 62%; bottom: 132px; margin-left: -8px; }
      </style>
      <div class="top">[GC:G0 G54 G17 G21 G90 G94 M5 M9 T0 F0 S100]<br>F/S: 0 / 0<br>PS: P</div>
      <div class="views">
        <button aria-label="Top view">${icon('cubeTop', 30)}</button>
        <button aria-label="Isometric view">${icon('cubeAll', 30)}</button>
        <button aria-label="Front view">${icon('cubeLeft', 30)}</button>
        <button aria-label="Left view">${icon('cubeRight', 30)}</button>
        <button aria-label="Grid">${icon('grid', 34)}</button>
        <button aria-label="Fit">${icon('expand', 36)}</button>
      </div>
      <div>X: 0.000 ... 0.000<br>Y: 0.000 ... 0.000<br>Z: 0.000 ... 0.000<br>0.000 / 0.000 / 0.000</div>
      <div class="right">00:00:00 / 00:00:00<br>Buffer: 0 / 0 / 0<br>Vertices: 160<br>FPS: 63</div>
      <svg class="axes" width="70" height="60" viewBox="0 0 70 60" aria-hidden="true">
        <path d="M12 50V12" stroke="#5ae85a" stroke-width="2"/>
        <path d="M12 2L15 13H9Z" fill="#1fe01f"/>
        <path d="M16 3L20 8L23 3M20 8V13" fill="none" stroke="#4be04b" stroke-width="1.500"/>
        <path d="M12 50H50" stroke="#d04040" stroke-width="2"/>
        <path d="M12 50H24" stroke="#2424c8" stroke-width="1.500"/>
        <path d="M48 47L59 50L48 53Z" fill="#e01010"/>
        <path d="M51 36L58 45M58 36L51 45" stroke="#d03030" stroke-width="1.500"/>
        <rect x="7" y="45" width="10" height="10" fill="none" stroke="#e00000" stroke-width="1.500"/>
      </svg>
    `;
  }
}
customElements.define('visualizer-view', VisualizerView);

class GcodeTable extends HTMLElement {
  connectedCallback() {
    this.attachShadow({ mode: 'open' }).innerHTML = `
      <style>
        :host {
          display: block;
          border: 1px solid #bdbdbd;
          border-top-color: #808080;
          background: #fff;
        }
        table { width: 100%; border-collapse: collapse; table-layout: fixed; }
        col.narrow { width: 200px; }
        th {
          height: 38px;
          padding: 0;
          background: linear-gradient(#bcbcbc, #bcbcbc) right / 2px 30px no-repeat #ebebeb;
          font-weight: 400;
        }
        td {
          height: 58px;
          padding: 0;
          border-right: 1px dashed #dedede;
          border-bottom: 1px dashed #dedede;
        }
      </style>
      <table>
        <colgroup><col class="narrow"><col class="narrow"><col class="narrow"><col></colgroup>
        <thead><tr><th>#</th><th>Command</th><th>State</th><th>Response</th></tr></thead>
        <tbody><tr><td></td><td></td><td></td><td></td></tr></tbody>
      </table>
    `;
  }
}
customElements.define('gcode-table', GcodeTable);

class ProgramArea extends HTMLElement {
  connectedCallback() {
    this.attachShadow({ mode: 'open' }).innerHTML = `
      <style>
        :host { display: flex; flex-direction: column; }
        .views { display: grid; grid-template-columns: 1332fr 1136fr; gap: 32px; }
        visualizer-view { margin: 24px 0 34px; }
        range-slider { margin: 0 4px; }
        .log {
          box-sizing: border-box;
          height: 448px;
          margin: 24px 0 44px;
          padding: 8px;
          border: 2px solid #808080;
          background: #fff;
        }
        .entry { display: flex; gap: 33px; padding: 0 14px 0 10px; }
        .entry combo-box { flex: 1; }
        h2 {
          margin: 66px 0 24px;
          padding: 9px 26px;
          border: 2px solid #d0d0d0;
          color: #000;
          font-size: inherit;
          font-weight: 400;
        }
        gcode-table { flex: 1; }
        footer { display: flex; align-items: center; gap: 32px; padding: 39px 14px 14px 4px; }
        footer check-box { flex: 1; }
      </style>
      <div class="views">
        <dock-panel heading="Visualizer">
          <visualizer-view></visualizer-view>
          <range-slider disabled label="Program position" value="0"></range-slider>
        </dock-panel>
        <dock-panel heading="Console">
          <div class="log">Connection error 11: Is a directory</div>
          <div class="entry">
            <combo-box label="Command"></combo-box>
            <push-button icon="plane" label="Send command"></push-button>
            <push-button icon="eraser" label="Clear console"></push-button>
          </div>
        </dock-panel>
      </div>
      <h2>G-code program</h2>
      <gcode-table></gcode-table>
      <footer>
        <check-box>Scroll</check-box>
        <push-button>Open</push-button>
        <push-button disabled>Reset</push-button>
        <push-button disabled>Send</push-button>
        <push-button disabled>From Line</push-button>
        <push-button disabled>Pause</push-button>
        <push-button disabled>Abort</push-button>
      </footer>
    `;
  }
}
customElements.define('program-area', ProgramArea);

class UserPanel extends HTMLElement {
  connectedCallback() {
    this.attachShadow({ mode: 'open' }).innerHTML = `
      <style>
        :host { display: block; }
        .first { margin-top: 27px; }
        .keys { display: grid; grid-template-columns: repeat(4, 1fr); gap: 20px; padding: 33px 30px 32px; }
        .stop { padding: 34px 30px 33px; }
      </style>
      <dock-panel heading="User">
        <group-box lip class="first" heading="User commands">
          <div class="keys">
            <key-button low icon="zeroXY" label="Zero XY"></key-button>
            <key-button low icon="zeroZ" label="Zero Z"></key-button>
            <key-button low icon="probe" label="Probe"></key-button>
            <key-button low icon="safeZ" label="Safe position"></key-button>
          </div>
        </group-box>
        <group-box lip heading="Emergency button">
          <div class="stop"><key-button danger icon="hand" label="Emergency stop"></key-button></div>
        </group-box>
        <group-box lip heading="Coordinate system">
          <div class="keys">
            <key-button active>54</key-button>
            <key-button>55</key-button>
            <key-button>56</key-button>
            <key-button>57</key-button>
            <key-button>X0</key-button>
            <key-button>Y0</key-button>
            <key-button>Z0</key-button>
            <key-button>00</key-button>
          </div>
        </group-box>
        <group-box filler></group-box>
      </dock-panel>
    `;
  }
}
customElements.define('user-panel', UserPanel);

class DevicePanel extends HTMLElement {
  connectedCallback() {
    const axis = (name, work, machine) => `
      <span>${name}</span>
      <value-field label="Work ${name}" value="${work}"></value-field>
      <value-field label="Machine ${name}" value="${machine}"></value-field>`;
    this.attachShadow({ mode: 'open' }).innerHTML = `
      <style>
        :host { display: block; color: #111; }
        .first { margin-top: 33px; }
        .state {
          display: grid;
          grid-template-columns: 10px 1fr 1fr;
          align-items: center;
          gap: 30px 27px;
          padding: 31px 32px 31px 30px;
        }
        .state .title { margin: 0 -3px -7px; }
        .status {
          grid-column: 1 / 4;
          display: flex;
          align-items: center;
          justify-content: space-between;
          margin-top: -3px;
          padding: 0 18px 0 46px;
        }
        .status value-field { --field-height: 40px; width: 178px; }
        .keys { display: grid; grid-template-columns: repeat(4, 1fr); gap: 20px; padding: 31px 30px 32px; }
        .spindle { display: grid; grid-template-columns: 1fr 76px; align-items: center; gap: 24px; padding: 50px 30px 42px 34px; }
        .speed { display: grid; gap: 32px; }
        .row { display: flex; align-items: center; justify-content: space-between; }
        .jog { padding: 38px 48px 35px 34px; }
        .pad {
          display: grid;
          grid-template-columns: 60px 60px 60px 60px;
          grid-template-rows: repeat(3, 76px);
          gap: 20px;
        }
        .pad .z { grid-column: 4; margin: 0 -18px 0 18px; }
        .pad .u { grid-area: 1 / 2; }
        .pad .l { grid-area: 2 / 1; }
        .pad .c { grid-area: 2 / 2; }
        .pad .r { grid-area: 2 / 3; }
        .pad .d { grid-area: 3 / 2; }
        .jog .row { margin: 64px 10px 28px 0; }
        .jog range-slider { margin: 0 4px; }
        .jog range-slider + .row { margin-top: 34px; }
        .jog check-box { margin-top: 20px; }
      </style>
      <dock-panel heading="Device">
        <group-box inset class="first" heading="State">
          <div class="state">
            <span class="title"></span><span class="title">Work</span><span class="title">Machine</span>
            ${axis('X', '0.000', '0.000')}
            ${axis('Y', '-57.975', '0.000')}
            ${axis('Z', '21.785', '0.000')}
            <div class="status">Status: <value-field flat label="Status" value="Idle"></value-field></div>
          </div>
        </group-box>
        <group-box inset heading="Control">
          <div class="keys">
            <key-button icon="home" label="Home"></key-button>
            <key-button icon="pause" label="Hold"></key-button>
            <key-button icon="reset" label="Reset"></key-button>
            <key-button icon="unlock" label="Unlock"></key-button>
            <key-button icon="list" label="Check"></key-button>
            <key-button icon="sleep" label="Sleep"></key-button>
            <key-button icon="door" label="Door"></key-button>
            <key-button icon="drop" label="Coolant"></key-button>
          </div>
        </group-box>
        <group-box heading="Spindle">
          <div class="spindle">
            <div class="speed">
              <div class="row">Speed: <value-field style="width: 63px" label="Speed" value="100"></value-field></div>
              <range-slider label="Spindle speed" value="10"></range-slider>
            </div>
            <key-button icon="spindle" label="Spindle on"></key-button>
          </div>
        </group-box>
        <group-box heading="Jog">
          <div class="jog">
            <div class="pad">
              <key-button class="u" blue small icon="up" label="Y plus"></key-button>
              <key-button class="l" blue small icon="left" label="X minus"></key-button>
              <key-button class="c" small icon="stop" label="Stop"></key-button>
              <key-button class="r" blue small icon="right" label="X plus"></key-button>
              <key-button class="d" blue small icon="down" label="Y minus"></key-button>
              <key-button class="z" style="grid-row: 1" small icon="zUp" label="Z plus"></key-button>
              <key-button class="z" style="grid-row: 3" small icon="zDown" label="Z minus"></key-button>
            </div>
            <div class="row">Step: <combo-box style="width: 198px" label="Step" value="1"></combo-box></div>
            <range-slider label="Step" value="500"></range-slider>
            <div class="row">Feed: <combo-box style="width: 138px" label="Feed" value="100"></combo-box></div>
            <range-slider label="Feed" value="400"></range-slider>
            <check-box>Keyboard control</check-box>
          </div>
        </group-box>
        <group-box filler></group-box>
      </dock-panel>
    `;
  }
}
customElements.define('device-panel', DevicePanel);

class DockTile extends HTMLElement {
  connectedCallback() {
    const name = this.getAttribute('name');
    const badge = this.getAttribute('badge');
    const [color, art] = TILES[name];
    const grad = (id, a, b) => `<linearGradient id="${id}" x1="0" y1="0" x2="0" y2="1"><stop stop-color="${a}"/><stop offset="1" stop-color="${b}"/></linearGradient>`;
    this.attachShadow({ mode: 'open' }).innerHTML = `
      <style>
        :host { position: relative; display: block; width: 90px; height: 90px; }
        .tile {
          display: block;
          width: 90px;
          height: 90px;
          border-radius: 22px;
          background: ${color};
          box-shadow: 0 2px 4px rgba(0, 0, 0, .25), 0 0 0 1px rgba(255, 255, 255, .2);
          font-family: Inter, sans-serif;
        }
        :host([bare]) .tile { border-radius: 0; box-shadow: none; }
        .badge {
          position: absolute;
          top: -10px;
          right: -12px;
          width: 44px;
          height: 44px;
          border-radius: 50%;
          background: #fc3d39;
          color: #fff;
          font-size: 25px;
          line-height: 44px;
          text-align: center;
        }
        .dot {
          position: absolute;
          left: 41px;
          bottom: -23px;
          width: 8px;
          height: 8px;
          border-radius: 50%;
          background: var(--dot, #000);
        }
      </style>
      <svg class="tile" viewBox="0 0 90 90" role="img" aria-label="${name}">
        <defs>
          ${grad('g1', '#04bcff', '#0a63ff')}${grad('g2', '#46aef6', '#1659fa')}${grad('g3', '#4af064', '#22b537')}
          ${grad('g4', '#18aefa', '#1757f0')}${grad('g5', '#72beff', '#7260ee')}${grad('g6', '#3a7cf0', '#0506a0')}${grad('g7', '#a8c8ff', '#2a68ff')}
        </defs>
        ${art}
      </svg>
      ${badge ? `<span class="badge">${badge}</span>` : ''}
      ${this.hasAttribute('open') ? '<span class="dot"></span>' : ''}
    `;
  }
}
customElements.define('dock-tile', DockTile);

class AppDock extends HTMLElement {
  connectedCallback() {
    const pinned = ['Finder', 'Apps', 'Safari', 'Messages', 'Mail', 'Photos', 'FaceTime', 'Calendar', 'Notes', 'App Store', 'Settings', 'Mirroring', 'Frames', 'Code'];
    const running = ['Chrome', 'Zoom', 'Terminal', 'Slack', 'Mattermost', 'Discord', 'Illustrator', 'Maps', 'Monitor', 'JLC', 'Fusion', 'Preview', 'Candle'];
    const open = ['Finder', 'Mail', 'Notes', 'Code'];
    this.attachShadow({ mode: 'open' }).innerHTML = `
      <style>
        :host { position: relative; display: flex; justify-content: center; padding: 3px 0 11px; }
        .shelf {
          display: flex;
          align-items: center;
          gap: 30px;
          box-sizing: border-box;
          height: 150px;
          padding: 0 29px;
          border-radius: 46px;
          background: rgba(165, 165, 165, .335);
          box-shadow: inset 0 0 0 1px rgba(255, 255, 255, .3);
          backdrop-filter: blur(10px);
        }
        .pinned { --dot: #555; }
        hr { width: 2px; height: 112px; margin: 0 11px; border: 0; background: #999; }
        hr.last { background: #111; }
      </style>
      <div class="shelf">
        ${pinned.map((n) => `<dock-tile class="pinned" name="${n}" ${open.includes(n) ? 'open' : ''} ${n === 'Messages' ? 'badge="37"' : ''}></dock-tile>`).join('')}
        <hr>
        ${running.map((n) => `<dock-tile name="${n}" open></dock-tile>`).join('')}
        <hr class="last">
        <dock-tile bare name="Trash"></dock-tile>
      </div>
    `;
  }
}
customElements.define('app-dock', AppDock);
</script>
</body>
</html>
